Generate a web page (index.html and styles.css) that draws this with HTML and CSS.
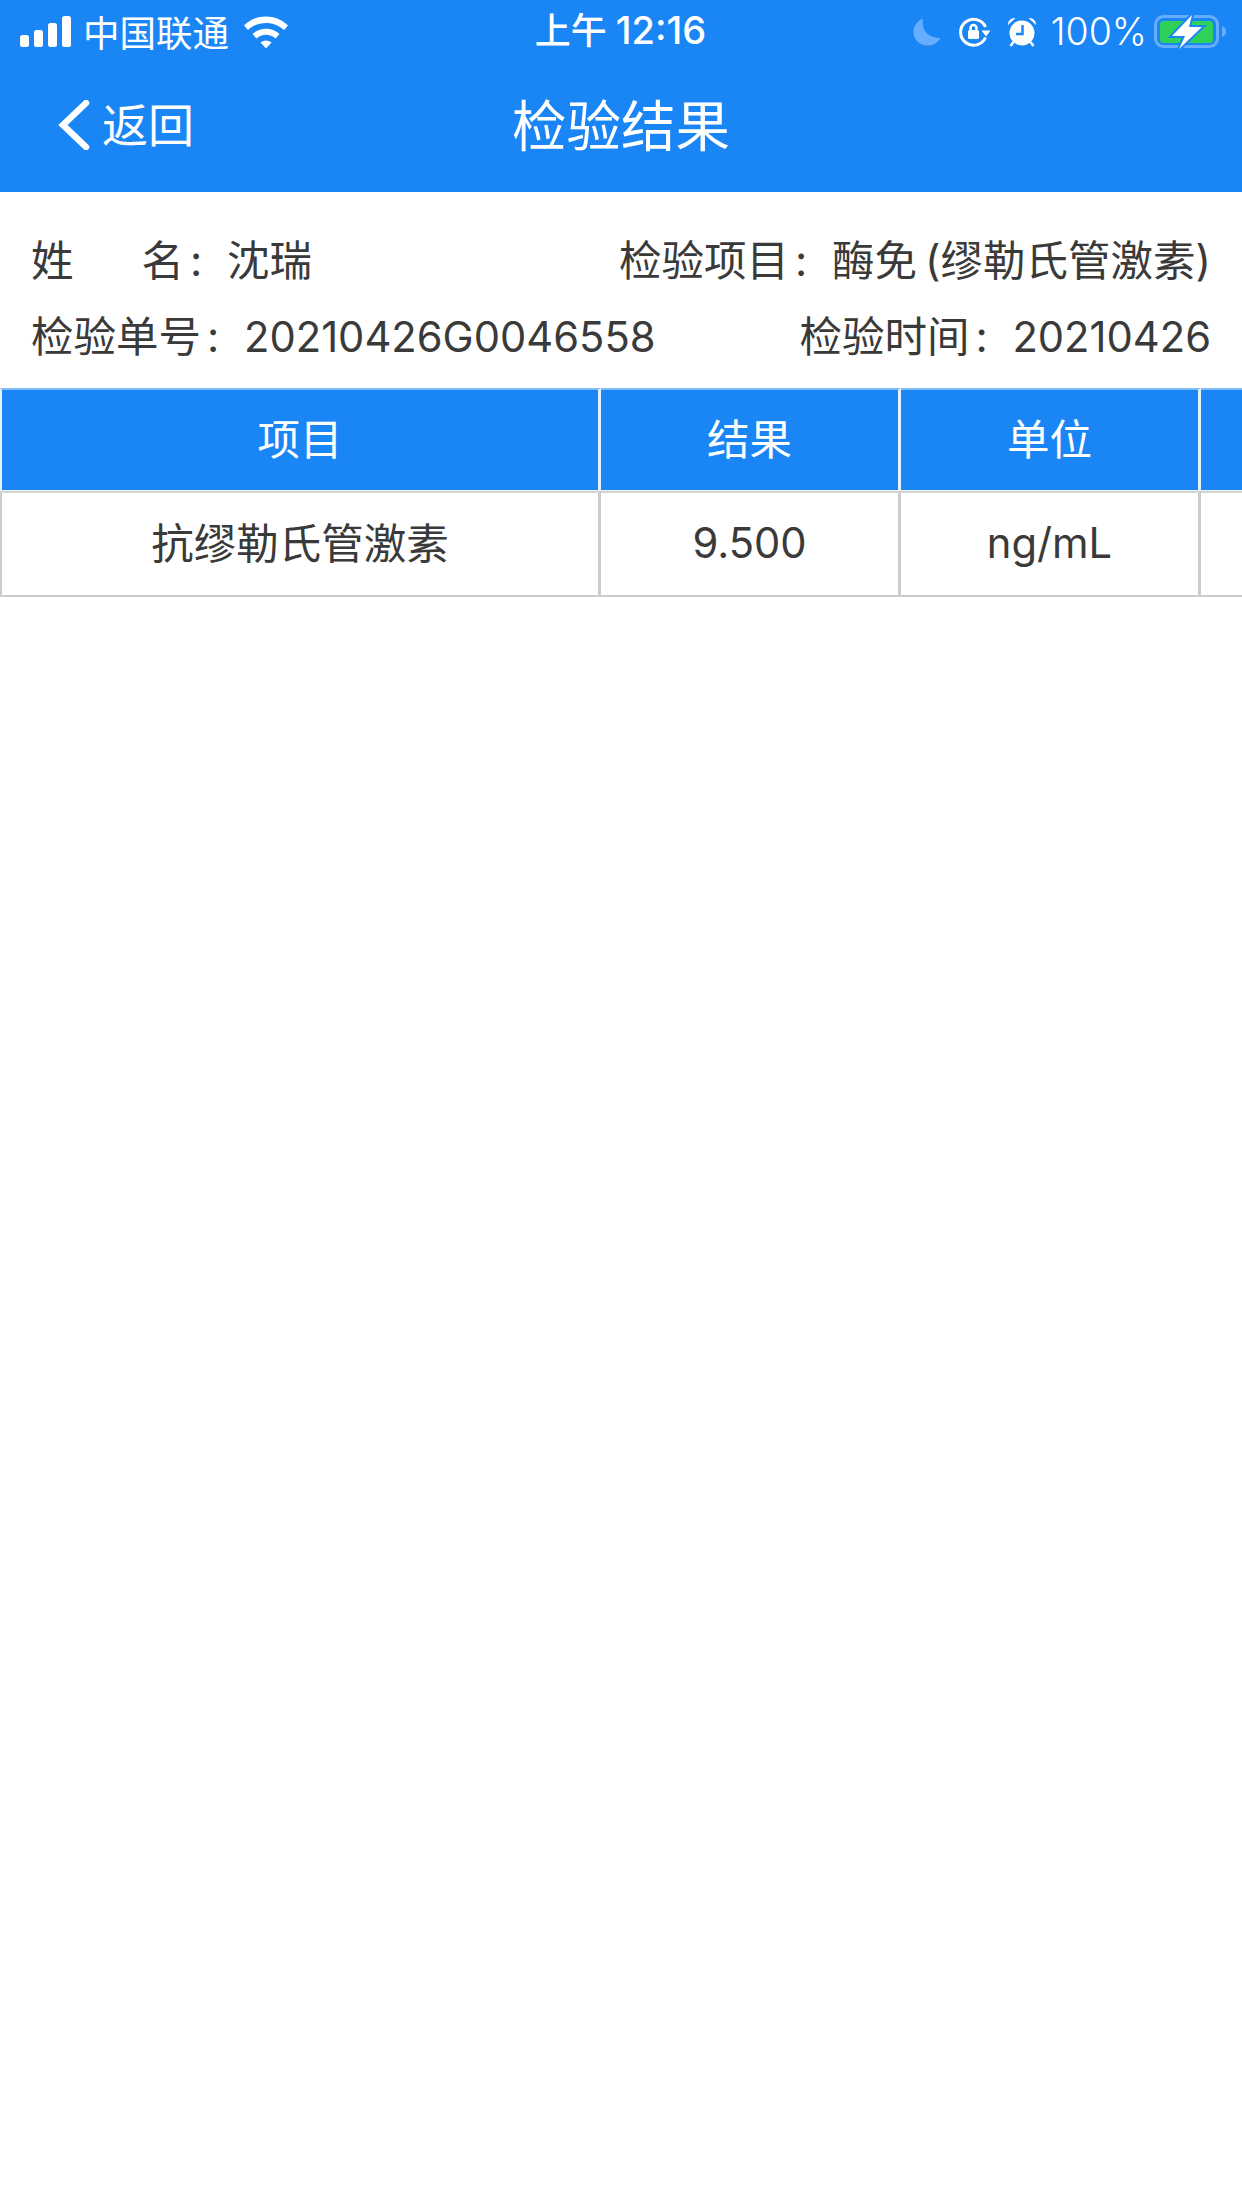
FILE: index.html
```html
<!DOCTYPE html>
<html>
<head>
	<title>检验结果</title>
	<link rel="stylesheet" href="styles.css">
</head>
<body>
	<header class="top">
		<div class="status">
			<div class="status-left">
				<svg class="signal" width="52" height="32" viewBox="0 0 52 32">
					<rect x="0" y="19" width="9" height="12" rx="2.5"/>
					<rect x="14" y="14" width="9" height="17" rx="2.5"/>
					<rect x="28" y="7" width="9" height="24" rx="2.5"/>
					<rect x="42" y="0" width="9" height="31" rx="2.5"/>
				</svg>
				<span class="carrier">中国联通</span>
				<svg class="wifi" width="46" height="34" viewBox="0 0 46 34">
					<path d="M1 10.5C13 -1.500 33 -1.500 45 10.500L41 15C31 5.500 15 5.500 5 15Z"/>
					<path d="M9.500 19C17 12 29 12 36.500 19L32.500 23.500C27 18.500 19 18.500 13.500 23.500Z"/>
					<path d="M17.500 27.500C20.500 24.800 25.500 24.800 28.500 27.500L23 33.500Z"/>
				</svg>
			</div>
			<div class="time"><span class="time-cjk">上午</span>12:16</div>
			<div class="status-right">
				<svg class="moon" width="28" height="28" viewBox="0 0 28 28">
					<path d="M10 0.500C8.500 10 13 20 27.500 20C24.500 25 20 27.500 14.500 27.500C6.500 27.500 0.500 21.500 0.500 14C0.500 8 4 3 10 0.500Z"/>
				</svg>
				<svg class="rotlock" width="32" height="30" viewBox="0 0 32 30">
					<path class="line" d="M26.500 20.500A13 13 0 1 1 26.500 10"/>
					<path d="M22.500 13.500H31.500L27 19.500Z"/>
					<rect x="9" y="13" width="11" height="9" rx="1.500"/>
					<path class="line thin" d="M11.500 13.500V11A3 3 0 0 1 17.500 11V13.500"/>
				</svg>
				<svg class="alarm" width="30" height="30" viewBox="0 0 30 30">
					<circle cx="15" cy="16" r="12.500"/>
					<path d="M1 8C1 3.500 4 0.500 8.500 1Z"/>
					<path d="M29 8C29 3.500 26 0.500 21.500 1Z"/>
					<path class="hand" d="M15.500 8V17H9"/>
					<path class="line thin" d="M6.500 25L3.500 29M23.500 25L26.500 29"/>
				</svg>
				<span class="battery-pct">100%</span>
				<svg class="battery" width="74" height="36" viewBox="0 0 74 36">
					<rect class="shell" x="1.500" y="2.500" width="62" height="30" rx="8"/>
					<rect class="fill" x="6" y="7" width="53" height="22" rx="3.500"/>
					<path class="nub" d="M68 12C71 13 72 15 72 17.500C72 20 71 22 68 23Z"/>
					<path class="bolt-edge" d="M38 1L18 22H31L25 35L48 13H35Z"/>
					<path class="bolt" d="M38 1L18 22H31L25 35L48 13H35Z"/>
				</svg>
			</div>
		</div>
		<nav class="nav">
			<a class="back">
				<svg width="32" height="50" viewBox="0 0 32 50">
					<path d="M28 3L5 25L28 47"/>
				</svg>
				<span>返回</span>
			</a>
			<h1>检验结果</h1>
			<div></div>
		</nav>
	</header>

	<section class="info">
		<div class="info-row">
			<p><span class="label-name"><span>姓</span><span>名</span></span><span class="colon">:</span>沈瑞</p>
			<p>检验项目<span class="colon">:</span><span class="project">酶免 (缪勒氏管激素)</span></p>
		</div>
		<div class="info-row">
			<p>检验单号<span class="colon">:</span><span class="num">20210426G0046558</span></p>
			<p>检验时间<span class="colon">:</span><span class="num">20210426</span></p>
		</div>
	</section>

	<div class="table-wrap">
		<table>
			<thead>
				<tr>
					<th class="col-name">项目</th>
					<th>结果</th>
					<th>单位</th>
					<th></th>
				</tr>
			</thead>
			<tbody>
				<tr>
					<td>抗缪勒氏管激素</td>
					<td class="num">9.500</td>
					<td class="num">ng/mL</td>
					<td></td>
				</tr>
			</tbody>
		</table>
	</div>
</body>
</html>
```

FILE: styles.css
```css
body {
	font-family: Inter, "Noto Sans CJK SC", sans-serif;
	background-color: white;
	color: #3a3a3a;
	margin: 0;
	padding: 0;
}

p, h1 {
	margin: 0;
	font-weight: normal;
}

.top {
	background-color: #1a86f5;
	color: white;
	height: 192px;
}

.status {
	display: grid;
	grid-template-columns: 1fr auto 1fr;
	align-items: center;
	height: 60px;
	padding: 0 14px 0 20px;
}

.status svg {
	fill: white;
	display: block;
}

.status-left, .status-right {
	display: flex;
	align-items: center;
}

.status-right {
	justify-content: flex-end;
}

.carrier {
	font-size: 36.500px;
	margin-left: 11px;
}

.wifi {
	margin-left: 14px;
}

.time {
	font-size: 38px;
	font-weight: 500;
	line-height: 60px;
	padding: 0 7px 2px 0;
}

.time-cjk {
	font-size: 36px;
	margin-right: 9px;
}

.status .moon {
	fill: #66adff;
}

.rotlock {
	margin-left: 18px;
}

.alarm {
	margin-left: 16px;
}

.status .line {
	fill: none;
	stroke: white;
	stroke-width: 3;
}

.status .thin {
	stroke-width: 2.5;
}

.status .hand {
	fill: none;
	stroke: #1a86f5;
	stroke-width: 2.5;
}

.battery-pct {
	font-size: 37.500px;
	font-weight: 300;
	margin-left: 14px;
}

.battery {
	margin-left: 7px;
}

.status .shell {
	fill: none;
	stroke: #66adff;
	stroke-width: 3;
}

.status .fill {
	fill: #30d158;
}

.status .nub {
	fill: #66adff;
}

.status .bolt-edge {
	fill: none;
	stroke: #1a86f5;
	stroke-width: 4;
}

.nav {
	display: grid;
	grid-template-columns: 1fr auto 1fr;
	align-items: center;
	height: 132px;
	padding: 0 0 8px 0;
	box-sizing: border-box;
}

.nav h1 {
	font-size: 54.500px;
}

.back {
	display: flex;
	align-items: center;
	padding-left: 58px;
	font-size: 46px;
}

.back svg {
	fill: none;
	stroke: white;
	stroke-width: 6.500;
	stroke-linecap: round;
	margin-right: 12px;
	margin-top: 5px;
}

.info {
	padding: 31px 31px 13px;
	font-size: 42.500px;
}

.info-row {
	display: flex;
	justify-content: space-between;
	line-height: 76px;
}

.label-name {
	display: inline-flex;
	justify-content: space-between;
	width: 153px;
}

.colon {
	display: inline-block;
	width: 43px;
	padding-left: 6px;
	box-sizing: border-box;
}

.project {
	word-spacing: -4px;
}

.num {
	font-size: 41.700px;
}

.table-wrap {
	overflow: hidden;
}

table {
	border-collapse: separate;
	border-spacing: 0;
	table-layout: fixed;
	width: 1501px;
	font-size: 42.500px;
}

th, td {
	box-sizing: border-box;
	width: 300px;
	padding: 0 0 8px 0;
	text-align: center;
	font-weight: normal;
}

td.num {
	padding-bottom: 2px;
}

th.col-name {
	width: 601px;
}

th {
	height: 103px;
	background-color: #1a86f5;
	color: white;
	border-top: 2px solid #7fbcf9;
	border-right: 3px solid #e8f2fd;
	border-bottom: 1px solid #e8f2fd;
}

th:first-child, td:first-child {
	border-left: 2px solid #e8f2fd;
}

td:first-child {
	border-left-color: #ccc;
}

td {
	height: 106px;
	border-top: 2px solid #d4d4d4;
	border-right: 3px solid #ccc;
	border-bottom: 2px solid #ccc;
}
```
